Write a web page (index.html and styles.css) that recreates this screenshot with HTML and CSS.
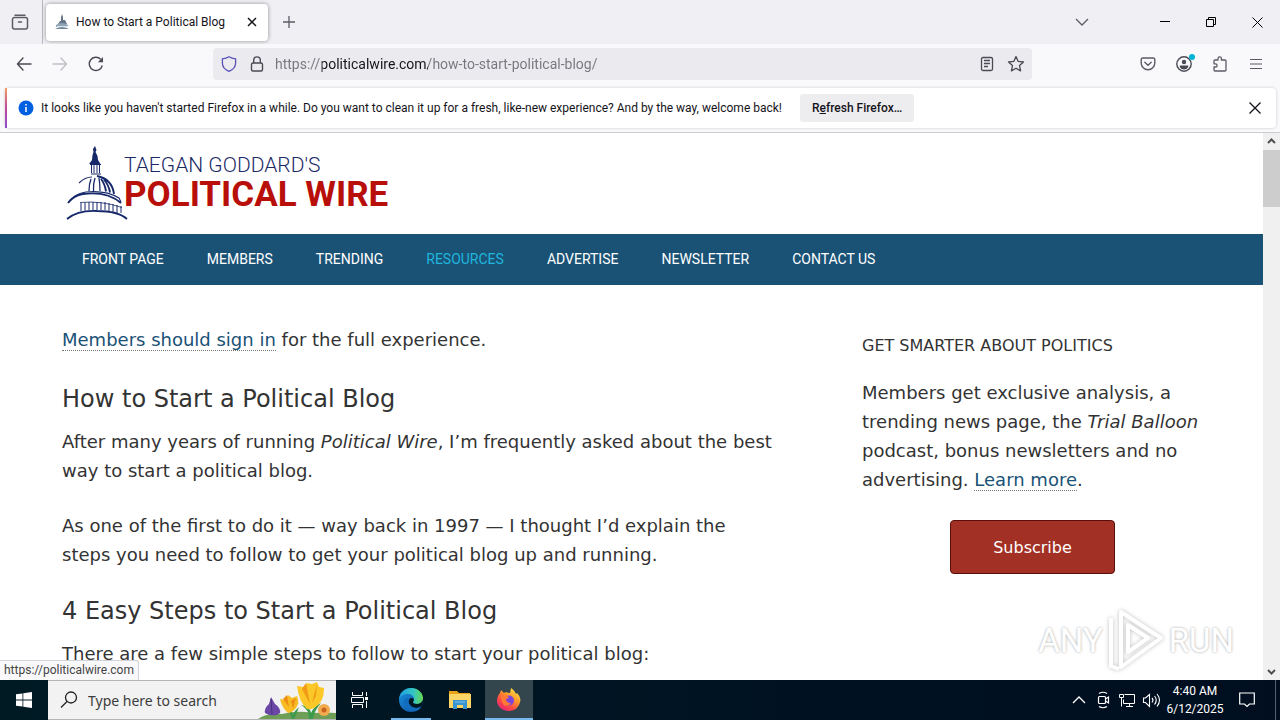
FILE: index.html
```
<!DOCTYPE html>
<html lang="en">
<head>
    <meta charset="UTF-8">
    <meta name="viewport" content="width=device-width, initial-scale=1.0">
    <title>How to Start a Political Blog</title>
    <link rel="stylesheet" href="styles.css">
</head>
<body>
    <div class="desktop">
        <div class="tabbar">
            <button class="icon-btn view-btn" aria-label="Firefox View">
                <svg width="20" height="20" viewBox="0 0 20 20" fill="none" stroke="#5b5b66" stroke-width="1.5" stroke-linecap="round"><path d="M5 3.2h10M4.5 5.5h11a2 2 0 0 1 2 2v7.500a2 2 0 0 1-2 2h-11a2 2 0 0 1-2-2V7.500a2 2 0 0 1 2-2zM8.500 10h3"/></svg>
            </button>
            <div class="tab">
                <svg width="16" height="16" viewBox="0 0 16 16"><path d="M8 0l1 3v3h2l2 4H4l2-3h1V3z" fill="#64748a"/><path d="M2 11q6-4 12 0v2H2z" fill="#8ea3b5"/><path d="M1 15q7-4 14 0z" fill="#73879b"/><path d="M3 12.500h11" stroke="#dfe6ec"/></svg>
                <span class="tab-title">How to Start a Political Blog</span>
                <button class="icon-btn tab-close" aria-label="Close tab">
                    <svg width="10" height="10" viewBox="0 0 10 10" stroke="#15141a" stroke-width="1.500"><path d="M1 1l8 8M9 1l-8 8"/></svg>
                </button>
            </div>
            <button class="icon-btn new-tab" aria-label="New tab">
                <svg width="12" height="12" viewBox="0 0 12 12" stroke="#5b5b66" stroke-width="1.300"><path d="M6 0v12M0 6h12"/></svg>
            </button>
            <div class="win-btns">
                <button class="icon-btn all-tabs" aria-label="List all tabs">
                    <svg width="14" height="8" viewBox="0 0 14 8" fill="none" stroke="#5b5b66" stroke-width="1.300"><path d="M1 1l6 6 6-6"/></svg>
                </button>
                <button class="icon-btn" aria-label="Minimize">
                    <svg width="10" height="10" viewBox="0 0 10 10" stroke="#000"><path d="M0 4.500h10"/></svg>
                </button>
                <button class="icon-btn" aria-label="Restore">
                    <svg width="10" height="10" viewBox="0 0 10 10" fill="none" stroke="#000"><path d="M.5 2.500h7v7h-7zM2.500 2.500v-2h7v7h-2"/></svg>
                </button>
                <button class="icon-btn" aria-label="Close">
                    <svg width="11" height="11" viewBox="0 0 11 11" stroke="#000"><path d="M.5.5l10 10M10.500.5l-10 10"/></svg>
                </button>
            </div>
        </div>

        <div class="toolbar">
            <div class="tool-group">
                <button class="icon-btn" aria-label="Back">
                    <svg width="16" height="16" viewBox="0 0 16 16" fill="none" stroke="#4a4a55" stroke-width="1.400" stroke-linecap="round"><path d="M15 8H1.500M7 2L1.500 8 7 14"/></svg>
                </button>
                <button class="icon-btn" aria-label="Forward" disabled>
                    <svg width="16" height="16" viewBox="0 0 16 16" fill="none" stroke="#bfbfc6" stroke-width="1.400" stroke-linecap="round"><path d="M1 8h13.500M9 2l5.500 6L9 14"/></svg>
                </button>
                <button class="icon-btn" aria-label="Reload">
                    <svg width="16" height="16" viewBox="0 0 16 16" fill="none" stroke="#4a4a55" stroke-width="1.400"><path d="M14.300 9.500A6.600 6.600 0 1 1 12.700 3.300"/><path d="M15 1v5.200H9.800z" fill="#4a4a55" stroke="none"/></svg>
                </button>
            </div>
            <div class="urlbar">
                <svg width="16" height="16" viewBox="0 0 16 16" fill="none" stroke="#5b50b8" stroke-width="1.300"><path d="M8 .8C10 2 12.200 2.600 14.600 2.900V7c0 4-2.600 6.800-6.600 8.300C4 13.800 1.400 11 1.400 7V2.900C3.800 2.600 6 2 8 .8z"/></svg>
                <svg width="16" height="16" viewBox="0 0 16 16" fill="none" stroke="#4a4a55" stroke-width="1.400"><rect x="2.500" y="7" width="11" height="8" rx="1.500"/><path d="M4.700 7V4.200a3.300 3.300 0 0 1 6.600 0V7"/></svg>
                <input class="url-input" type="text" aria-label="Address" value="https://politicalwire.com/how-to-start-political-blog/">
                <svg width="16" height="16" viewBox="0 0 16 16" fill="none" stroke="#4a4a55" stroke-width="1.300"><rect x="2.500" y="1.500" width="11" height="13" rx="1.500"/><path d="M5 4.500h6M5 7.500h6M5 10.500h4"/></svg>
                <svg width="18" height="18" viewBox="0 0 18 18" fill="none" stroke="#4a4a55" stroke-width="1.300" stroke-linejoin="round"><path d="M9 1.500l2.200 4.900 5.300.6-4 3.600 1.100 5.300L9 13.200l-4.600 2.700 1.100-5.300-4-3.600 5.300-.6z"/></svg>
            </div>
            <div class="tool-group">
                <button class="icon-btn" aria-label="Save to Pocket">
                    <svg width="16" height="16" viewBox="0 0 16 16" fill="none" stroke="#5b5b66" stroke-width="1.400" stroke-linecap="round"><path d="M2.500 2h11A1.300 1.300 0 0 1 14.800 3.300V7A6.800 6.800 0 0 1 1.200 7V3.300A1.300 1.300 0 0 1 2.500 2zM4.800 6.300L8 9.300l3.200-3"/></svg>
                </button>
                <button class="icon-btn account" aria-label="Account">
                    <svg width="16" height="16" viewBox="0 0 16 16"><circle cx="8" cy="8" r="7.200" fill="none" stroke="#4a4a55" stroke-width="1.400"/><circle cx="8" cy="6" r="2.200" fill="#4a4a55"/><path d="M3.800 9.500h8.400v1.500q-1.200 2.600-4.200 2.600t-4.200-2.600z" fill="#4a4a55"/></svg>
                    <span class="badge"></span>
                </button>
                <button class="icon-btn" aria-label="Extensions">
                    <svg width="16" height="16" viewBox="0 0 16 16" fill="none" stroke="#5b5b66" stroke-width="1.300" stroke-linejoin="round"><path d="M6 4V2.500a1.700 1.700 0 0 1 3.400 0V4H13a1 1 0 0 1 1 1v9a1 1 0 0 1-1 1H3a1 1 0 0 1-1-1v-3h1.500a1.600 1.600 0 0 0 0-3.200H2V5a1 1 0 0 1 1-1z"/></svg>
                </button>
                <button class="icon-btn" aria-label="Menu">
                    <svg width="12" height="12" viewBox="0 0 12 12" stroke="#5b5b66" stroke-width="1.200"><path d="M0 1.500h12M0 6h12M0 10.500h12"/></svg>
                </button>
            </div>
        </div>

        <div class="notice-wrap">
            <div class="notice">
                <svg width="16" height="16" viewBox="0 0 16 16"><circle cx="8" cy="8" r="7.500" fill="#0060df"/><path d="M8 7v5M8 4v1.600" stroke="#fff" stroke-width="1.500"/></svg>
                <p class="notice-text">It looks like you haven't started Firefox in a while. Do you want to clean it up for a fresh, like-new experience? And by the way, welcome back!</p>
                <button class="refresh">R<u>e</u>fresh Firefox…</button>
                <button class="icon-btn notice-close" aria-label="Dismiss">
                    <svg width="12" height="12" viewBox="0 0 12 12" stroke="#15141a" stroke-width="1.300"><path d="M.5.5l11 11M11.500.5l-11 11"/></svg>
                </button>
            </div>
        </div>

        <div class="viewport">
            <div class="page">
                <header class="header">
                    <a class="logo" href="#">
                        <svg width="62" height="76" viewBox="0 0 62 76" fill="none" stroke="#16286a">
                            <path d="M29 1l1.500 4-1 2 2 4 .5 4 2.500 4H23l3-4 .5-5 1-3-.5-3z" fill="#16286a" stroke="none"/>
                            <path d="M25.500 20v8M28 20v8M31 20v8M33.500 20v8" stroke-width="1"/>
                            <path d="M24 19.500h11M25 29h10" stroke-width="1.200"/>
                            <path d="M13 38q6-6 13-6" stroke-width="1.100"/>
                            <path d="M25 34q-2 5-2 12M29 33q-2 6-1.500 13M33 33q1 6 1 13" stroke-width="1.300"/>
                            <path d="M31 31q15 3 17 18M35 34q4 5 5 12.500M38 34.500q5 6 6 13" stroke-width="1.900"/>
                            <path d="M2 58q6-8 15-9 24-3 38 9" stroke-width="1.900"/>
                            <path d="M8 52q5-4 12-5 20-2 33 6l2 4" stroke-width="1.100"/>
                            <path d="M15 58v8M19 57.500v8M23 57v8M27 57v8M31 57v8M35 57v8M39 57v8M43 58v8M47 59v8M51 60v8M55 61v7" stroke-width="1"/>
                            <path d="M14 57.500q22-2 42 5" stroke-width=".8"/>
                            <path d="M1 74q11-9 30-8 21 0 30 8" stroke-width="1.800"/>
                        </svg>
                        <span class="logo-text">
                            <span class="logo-top">TAEGAN GODDARD'S</span>
                            <span class="logo-main">POLITICAL WIRE</span>
                        </span>
                    </a>
                </header>
                <nav class="nav">
                    <a href="#">FRONT PAGE</a>
                    <a href="#">MEMBERS</a>
                    <a href="#">TRENDING</a>
                    <a href="#" class="active">RESOURCES</a>
                    <a href="#">ADVERTISE</a>
                    <a href="#">NEWSLETTER</a>
                    <a href="#">CONTACT US</a>
                </nav>
                <div class="columns">
                    <main class="content">
                        <p class="signin"><a href="#">Members should sign in</a> for the full experience.</p>
                        <h1>How to Start a Political Blog</h1>
                        <p>After many years of running <em>Political Wire</em>, I’m frequently asked about the best way to start a political blog.</p>
                        <p>As one of the first to do it — way back in 1997 — I thought I’d explain the steps you need to follow to get your political blog up and running.</p>
                        <h2>4 Easy Steps to Start a Political Blog</h2>
                        <p>There are a few simple steps to follow to start your political blog:</p>
                    </main>
                    <aside class="sidebar">
                        <h4>GET SMARTER ABOUT POLITICS</h4>
                        <p>Members get exclusive analysis, a trending news page, the <em>Trial Balloon</em> podcast, bonus newsletters and no advertising. <a href="#">Learn more</a>.</p>
                        <button class="subscribe">Subscribe</button>
                    </aside>
                </div>
            </div>
            <div class="scrollbar">
                <svg width="17" height="17" viewBox="0 0 17 17" fill="none" stroke="#505050" stroke-width="2"><path d="M5 10l3.500-3.500L12 10"/></svg>
                <div class="thumb"></div>
                <svg width="17" height="17" viewBox="0 0 17 17" fill="none" stroke="#505050" stroke-width="2"><path d="M5 7l3.500 3.500L12 7"/></svg>
            </div>
            <div class="status">https://politicalwire.com</div>
            <div class="watermark">
                <span>ANY</span>
                <svg width="58" height="64" viewBox="0 0 58 64" fill="none" stroke="#fff" stroke-width="4" stroke-linejoin="round"><path d="M14 4l40 26-40 29zM21 17l20 13-20 14zM4 10v48l8 3"/></svg>
                <span>RUN</span>
            </div>
        </div>

        <div class="taskbar">
            <button class="task-btn" aria-label="Start">
                <svg width="16" height="16" viewBox="0 0 16 16" fill="#fff"><path d="M0 2.300l6.500-.9v6.200H0zM7.300 1.300L16 0v7.600H7.300zM0 8.400h6.500v6.200L0 13.700zM7.300 8.400H16V16l-8.700-1.300z"/></svg>
            </button>
            <div class="search">
                <svg width="18" height="18" viewBox="0 0 18 18" fill="none" stroke="#222" stroke-width="1.300"><circle cx="11" cy="6.500" r="5.500"/><path d="M7 10.500L1 16.500"/></svg>
                <input class="search-input" type="text" aria-label="Search" placeholder="Type here to search">
                <svg width="80" height="38" viewBox="0 0 80 38">
                    <path d="M2 38q8-6 24-5 16-4 30-1 14-1 24 0v6z" fill="#6f9f57"/>
                    <path d="M15 16l4 7q6 4 5 9-6 5-15 0-1-5 4-9z" fill="#6a47a5"/>
                    <path d="M15 18l1 15" stroke="#46307c"/>
                    <path d="M36 38q-2-8-7-11 6 0 8 7 2-5 6-8-2 6-5 12zM53 38q0-10-8-14 9 1 10 8 3-7 10-10-7 8-8 16z" fill="#3b9b4b"/>
                    <path d="M24 18l5 1 3-5 4 3 5-2q3 7-1 12-4 5-8 5-6-5-8-14z" fill="#f8bd24"/>
                    <path d="M31 14l2 12-6-8zM40 17l-3 11-2-8z" fill="#ec8f13"/>
                    <path d="M41 5l6 1 4-4 5 1 5-2 2 5 5 1q0 12-6 17-5 5-11 4-8-7-10-23z" fill="#fbc828"/>
                    <path d="M50 2l4 21-8-15zM61 3l-1 12-4 7z" fill="#f09a18"/>
                    <circle cx="68" cy="29" r="6" fill="#f2ab4c"/><circle cx="68" cy="29" r="2.500" fill="#c9651f"/>
                </svg>
            </div>
            <button class="task-btn" aria-label="Task View">
                <svg width="18" height="16" viewBox="0 0 18 16" fill="none" stroke="#fff"><path d="M1.500 0v3.500h10V0M.5 5.500h12v5H.5zM1.500 16v-3.500h10V16M15.500 0v4M15.500 9v7"/><path d="M14 5h3v3h-3z" fill="#fff" stroke="none"/></svg>
            </button>
            <div class="apps">
                <button class="task-btn running" aria-label="Microsoft Edge">
                    <svg width="24" height="24" viewBox="0 0 24 24">
                        <defs>
                            <linearGradient id="edgeTop" x1="0" x2="1"><stop offset="0" stop-color="#1d9ee0"/><stop offset=".6" stop-color="#35c6c3"/><stop offset="1" stop-color="#66d94f"/></linearGradient>
                            <linearGradient id="edgeBody" x1="0" x2="1" y1="0" y2="1"><stop offset="0" stop-color="#1b91dd"/><stop offset="1" stop-color="#0c4fa0"/></linearGradient>
                        </defs>
                        <circle cx="12" cy="12" r="12" fill="url(#edgeBody)"/>
                        <path d="M0 11C1 4 6 0 12 0c7 0 12 5 12 10 0 4-3 6-6 6s-4-1-4-2 1-1 1-3c0-3-3-5-6-5-4 0-8 2-9 5z" fill="url(#edgeTop)"/>
                        <path d="M14 14c0 1 1 2 4 2 2 0 4-1 6-4-.2 3-1 5-2 6.500-3 2-8 2-11-1-2-2-2-5 0-7 2-1 4 0 4 1.500 0 1-1 1-1 2z" fill="#001621"/>
                        <path d="M5 13c0 6 5 10 10 10 4 0 6-2 7-4-4 2-9 1-11-2-2-2-2-5-1-7-3 0-5 1-5 3z" fill="#126cbd"/>
                    </svg>
                </button>
                <button class="task-btn" aria-label="File Explorer">
                    <svg width="22" height="20" viewBox="0 0 22 20"><path d="M0 1h8l2 2h11v4H0z" fill="#e8a317"/><path d="M0 4h22v14H0z" fill="#fbd667"/><path d="M4 10h14v9h-4v-4H8v4H4z" fill="#3b94d2"/><path d="M6 12h10" stroke="#7cc0ea"/></svg>
                </button>
                <button class="task-btn running focused" aria-label="Firefox">
                    <svg width="24" height="24" viewBox="0 0 24 24">
                        <defs>
                            <linearGradient id="fox" x1=".9" x2=".2" y1="0" y2="1"><stop offset="0" stop-color="#fff04a"/><stop offset=".4" stop-color="#ff9b2a"/><stop offset=".7" stop-color="#ff4a45"/><stop offset="1" stop-color="#e3207c"/></linearGradient>
                        </defs>
                        <path d="M3 5l1-3 3 3 2-1q2 1 4 1l1-5c3 2 4 4 5 6l1-1c3 3 4 6 3 9-1 5-5 9-11 9S0 19 0 13c0-3 1-6 3-8z" fill="url(#fox)"/>
                        <circle cx="12" cy="12.500" r="5" fill="#7a45d9"/>
                        <path d="M4 8q4-2 8 1-1 2-3 2 0 4 5 4-3 4-7 2-3-3-3-9z" fill="#ff7b35"/>
                    </svg>
                </button>
            </div>
            <div class="tray">
                <svg width="24" height="24" viewBox="0 0 24 24" fill="none" stroke="#fff" stroke-width="1.300"><path d="M6 15l6-6 6 6"/></svg>
                <svg width="24" height="24" viewBox="0 0 24 24" fill="none" stroke="#fff" stroke-width="1.200"><rect x="7.500" y="8.500" width="7" height="7" rx="1"/><path d="M14.500 11l3-2v6l-3-2M8 5.500q4-2.500 8 0M8 18.500q4 2.500 8 0"/></svg>
                <svg width="24" height="24" viewBox="0 0 24 24" fill="none" stroke="#fff"><path d="M9.500 6.500h10v9h-11v-4M14.500 15.500v3M11 18.500h7M4.500 6.500h4v3h-4zM6.500 9.500v9"/></svg>
                <svg width="24" height="24" viewBox="0 0 24 24" fill="none" stroke="#fff" stroke-width="1.100"><path d="M4.500 10v4.500h2l4 4V6.500l-4 3.500zM13 10q2 2 0 4.500M15.500 8q3.500 4 0 8.500M18 6q5 6 0 12.500"/></svg>
                <div class="clock">
                    <span>4:40 AM</span>
                    <span>6/12/2025</span>
                </div>
                <button class="notify" aria-label="Notifications">
                    <svg width="16" height="16" viewBox="0 0 16 16" fill="none" stroke="#fff" stroke-width="1.200"><path d="M.7 1h14.600v11H10.500L8 14.500 5.500 12H.7z"/></svg>
                </button>
            </div>
        </div>
    </div>
</body>
</html>
```
FILE: styles.css
```
*{
    margin: 0;
    padding: 0;
    box-sizing: border-box;
}
svg{
    display: block;
    flex-shrink: 0;
}
button{
    border: 0;
    background: none;
}
.desktop{
    display: flex;
    flex-direction: column;
    height: 100vh;
    overflow: hidden;
    font-family: Roboto, sans-serif;
    font-size: 12px;
    color: #15141a;
    background-color: #fff;
}
.icon-btn{
    display: flex;
    align-items: center;
    justify-content: center;
    width: 36px;
    height: 32px;
    flex-shrink: 0;
}

/* tab strip */
.tabbar{
    display: flex;
    align-items: center;
    height: 44px;
    flex-shrink: 0;
    background-color: #f0f0f4;
}
.tabbar .view-btn{
    width: 43px;
    height: 44px;
    padding-right: 2px;
    border-right: 1px solid #b8b8c0;
}
.tab{
    display: flex;
    align-items: center;
    gap: 6px;
    width: 222px;
    height: 37px;
    margin-left: 3px;
    padding: 0 4px 0 8px;
    background-color: #fff;
    border-radius: 4px;
    box-shadow: 0 0 4px rgba(0,0,0,.4);
}
.tab-title{
    flex: 1;
    white-space: nowrap;
}
.tab .tab-close{
    width: 24px;
    height: 24px;
}
.tabbar .new-tab{
    width: 42px;
}
.win-btns{
    display: flex;
    margin-left: auto;
}
.win-btns .icon-btn{
    width: 46px;
}
.win-btns .all-tabs{
    margin-right: 37px;
}

/* toolbar */
.toolbar{
    display: flex;
    align-items: center;
    height: 40px;
    padding: 0 6px;
    flex-shrink: 0;
    background-color: #f9f9fb;
}
.tool-group{
    display: flex;
}
.urlbar{
    display: flex;
    flex: 1;
    align-items: center;
    gap: 12px;
    height: 32px;
    margin: 0 98px 0 99px;
    padding: 0 7px 0 8px;
    background-color: #ebebef;
    border-radius: 4px;
}
.url-input{
    flex: 1;
    min-width: 0;
    margin-left: -2px;
    border: 0;
    outline: 0;
    font: 14px Roboto, sans-serif;
    color: transparent;
    background-image: linear-gradient(90deg, #75757c 47px, #15141a 47px, #15141a 153px, #75757c 153px);
    -webkit-background-clip: text;
    background-clip: text;
}
.account{
    position: relative;
}
.badge{
    position: absolute;
    top: 6px;
    right: 7px;
    width: 6px;
    height: 6px;
    border-radius: 50%;
    background-color: #00b3d4;
}

/* notification bar */
.notice-wrap{
    padding: 4px 4px 4px 5px;
    flex-shrink: 0;
    background-color: #f9f9fb;
    border-bottom: 1px solid #ccccd0;
}
.notice{
    display: flex;
    align-items: center;
    height: 40px;
    padding: 0 3px 0 11px;
    background-color: #fff;
    border-left: 2px solid;
    border-image: linear-gradient(#f5a15c, #c2479b, #8a4fd0) 1;
    border-radius: 4px;
    box-shadow: 0 0 3px rgba(0,0,0,.2);
}
.notice-text{
    margin-left: 7px;
    white-space: nowrap;
}
.refresh{
    height: 28px;
    margin-left: 18px;
    padding: 0 12px;
    font: 500 12px Roboto, sans-serif;
    white-space: nowrap;
    color: #15141a;
    background-color: #ededf0;
    border-radius: 3px;
}
.notice-close{
    margin-left: auto;
}

/* web page */
.viewport{
    position: relative;
    display: flex;
    flex: 1;
    min-height: 0;
    overflow: hidden;
}
.page{
    flex: 1;
    overflow: hidden;
    font-family: Verdana, "DejaVu Sans", sans-serif;
    font-size: 18px;
    line-height: 29px;
    color: #333;
}
.page a{
    color: #1a5276;
    text-decoration: none;
}
.header{
    padding: 12px 66px;
    height: 101px;
}
.logo{
    display: flex;
}
.logo-text{
    display: flex;
    flex-direction: column;
    padding-top: 7px;
    margin-left: -4px;
    font-family: Roboto, sans-serif;
    white-space: nowrap;
}
.page .logo-top{
    font-size: 21px;
    line-height: 26px;
    font-weight: 300;
    color: #1b2a66;
}
.page .logo-main{
    font-size: 35px;
    line-height: 34px;
    font-weight: bold;
    color: #b80f0a;
}
.nav{
    display: flex;
    gap: 1px;
    padding: 0 61px;
    background-color: #1a5276;
    font-family: Roboto, sans-serif;
    font-size: 14px;
    line-height: 51px;
}
.nav a{
    padding: 0 21px;
    color: #fff;
}
.nav a.active{
    color: #1fb5dc;
}
.columns{
    display: grid;
    grid-template-columns: 1fr 341px;
    gap: 84px;
    padding: 40px 60px 40px 62px;
}
.columns p{
    margin-bottom: 26px;
}
.columns p a{
    border-bottom: 1px dotted #777;
}
.content .signin{
    margin-bottom: 29px;
}
.content h1,
.content h2{
    margin-bottom: 12px;
    font-size: 24px;
    line-height: 32px;
    font-weight: normal;
}
.sidebar h4{
    margin: 6px 0 18px;
    font-size: 16px;
    font-weight: normal;
}
.subscribe{
    display: block;
    height: 54px;
    margin: 0 auto;
    padding: 0 42px;
    font: 16px Verdana, "DejaVu Sans", sans-serif;
    color: #fff;
    background-color: #a33025;
    border: 1px solid #5a0f0a;
    border-radius: 4px;
}
.scrollbar{
    display: flex;
    flex-direction: column;
    width: 17px;
    background-color: #f0f0f0;
}
.thumb{
    height: 57px;
    margin-bottom: auto;
    background-color: #cdcdcd;
}
.status{
    position: absolute;
    left: 0;
    bottom: 0;
    padding: 0 4px;
    line-height: 19px;
    color: #444;
    background-color: #f9f9fb;
    border: 1px solid #d4d4d8;
    border-width: 1px 1px 0 0;
    border-radius: 0 3px 0 0;
}
.watermark{
    position: absolute;
    right: 46px;
    bottom: 8px;
    display: flex;
    align-items: center;
    gap: 4px;
    font: 33px Roboto, sans-serif;
    color: #fff;
    text-shadow: 0 0 3px rgba(0,0,0,.35);
}
.watermark svg{
    filter: drop-shadow(0 0 2px rgba(0,0,0,.25));
}

/* taskbar */
.taskbar{
    display: flex;
    height: 40px;
    flex-shrink: 0;
    background: linear-gradient(90deg, #001a24, #000e20);
    color: #fff;
}
.task-btn{
    display: flex;
    align-items: center;
    justify-content: center;
    width: 48px;
    height: 40px;
}
.running{
    border-bottom: 2px solid #76b9ed;
    padding-top: 2px;
}
.running:not(.focused){
    width: 40px;
    margin: 0 4px;
}
.focused{
    background-color: #33454d;
}
.search{
    display: flex;
    align-items: center;
    width: 288px;
    padding-left: 12px;
    background-color: #f2f2f2;
    border: 1px solid #b5b5b5;
    border-width: 1px 0;
}
.search-input{
    flex: 1;
    min-width: 0;
    margin-left: 10px;
    border: 0;
    outline: 0;
    background: none;
    font: 14px "Noto Sans", sans-serif;
}
.search-input::placeholder{
    color: #3c3c3c;
}
.apps{
    display: flex;
    gap: 1px;
    margin-left: 3px;
}
.tray{
    display: flex;
    align-items: center;
    margin-left: auto;
    padding-right: 4px;
}
.clock{
    display: flex;
    flex-direction: column;
    width: 64px;
    text-align: center;
    line-height: 18px;
}
.notify{
    display: flex;
    align-items: center;
    justify-content: center;
    width: 49px;
    height: 40px;
    padding-right: 8px;
    border-right: 1px solid #55626d;
}
```
